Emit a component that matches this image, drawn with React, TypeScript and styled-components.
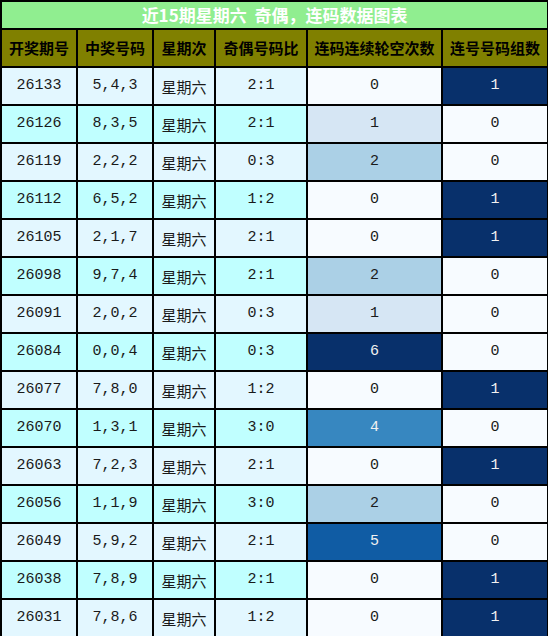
import React from "react"
import styled, { createGlobalStyle } from "styled-components"

const GlobalStyle = createGlobalStyle`
	html, body {
		margin: 0;
		padding: 0;
		background: #ffffff;
	}
`

const Table = styled.table`
	width: 547px;
	border-collapse: collapse;
	table-layout: fixed;
	font-family: "Liberation Mono", "Noto Sans CJK SC", monospace;
	font-size: 15px;
`

const TitleCell = styled.td`
	height: 26px;
	padding: 0;
	border: 2px solid #000;
	background: #90ee90;
	color: #ffffff;
	font-family: "Noto Sans CJK SC", sans-serif;
	font-weight: bold;
	font-size: 17px;
	text-align: center;
	line-height: 24px;
`

const HeadCell = styled.th`
	height: 36px;
	padding: 0;
	border: 2px solid #000;
	background: #808000;
	color: #000;
	font-family: "Noto Sans CJK SC", sans-serif;
	font-weight: bold;
	font-size: 15px;
	line-height: 20px;
	text-align: center;
	white-space: nowrap;
`

const Cell = styled.td<{ $bg: string; $fg?: string }>`
	height: 34px;
	padding: 0;
	border: 2px solid #000;
	background: ${(p) => p.$bg};
	color: ${(p) => p.$fg || "#1a1a1a"};
	line-height: 20px;
	text-align: center;
	white-space: nowrap;
`

const WeekCell = styled(Cell)`
	font-family: "Noto Sans CJK SC", sans-serif;
	padding-top: 2px;
`

// matplotlib "Blues"
const blues = ["#f7fbff", "#deebf7", "#c6dbef", "#9ecae1", "#6baed6", "#4292c6", "#2171b5", "#08519c", "#08306b"]

const hex = (h: string) => [1, 3, 5].map((i) => parseInt(h.slice(i, i + 2), 16))

const heat = (v: number, max: number) => {
	const t = Math.max(0, Math.min(1, v / max)) * (blues.length - 1)
	const i = Math.min(Math.floor(t), blues.length - 2)
	const f = t - i
	const a = hex(blues[i])
	const b = hex(blues[i + 1])
	const c = a.map((x, k) => Math.round(x + (b[k] - x) * f))
	return { bg: `rgb(${c.join(",")})`, fg: v / max > 0.5 ? "#f1f1f1" : "#1a1a1a" }
}

const cols = [76, 76, 62, 92, 135, 106]
const heads = ["开奖期号", "中奖号码", "星期次", "奇偶号码比", "连码连续轮空次数", "连号号码组数"]

const rows: [string, string, string, number, number][] = [
	["26133", "5,4,3", "2:1", 0, 1],
	["26126", "8,3,5", "2:1", 1, 0],
	["26119", "2,2,2", "0:3", 2, 0],
	["26112", "6,5,2", "1:2", 0, 1],
	["26105", "2,1,7", "2:1", 0, 1],
	["26098", "9,7,4", "2:1", 2, 0],
	["26091", "2,0,2", "0:3", 1, 0],
	["26084", "0,0,4", "0:3", 6, 0],
	["26077", "7,8,0", "1:2", 0, 1],
	["26070", "1,3,1", "3:0", 4, 0],
	["26063", "7,2,3", "2:1", 0, 1],
	["26056", "1,1,9", "3:0", 2, 0],
	["26049", "5,9,2", "2:1", 5, 0],
	["26038", "7,8,9", "2:1", 0, 1],
	["26031", "7,8,6", "1:2", 0, 1],
]

export default function App() {
	return (
		<>
			<GlobalStyle />
			<Table>
				<colgroup>
					{cols.map((w, i) => (
						<col key={i} style={{ width: w }} />
					))}
				</colgroup>
				<tbody>
					<tr>
						<TitleCell colSpan={6}>近15期星期六&nbsp;&nbsp;奇偶，连码数据图表</TitleCell>
					</tr>
					<tr>
						{heads.map((h) => (
							<HeadCell key={h}>{h}</HeadCell>
						))}
					</tr>
					{rows.map(([issue, nums, ratio, gap, pairs], i) => {
						const bg = i % 2 === 0 ? "#e3f7ff" : "#c0ffff"
						const g = heat(gap, 6)
						const p = heat(pairs, 1)
						return (
							<tr key={issue}>
								<Cell $bg={bg}>{issue}</Cell>
								<Cell $bg={bg}>{nums}</Cell>
								<WeekCell $bg={bg}>星期六</WeekCell>
								<Cell $bg={bg}>{ratio}</Cell>
								<Cell $bg={g.bg} $fg={g.fg}>{gap}</Cell>
								<Cell $bg={p.bg} $fg={p.fg}>{pairs}</Cell>
							</tr>
						)
					})}
				</tbody>
			</Table>
		</>
	)
}
